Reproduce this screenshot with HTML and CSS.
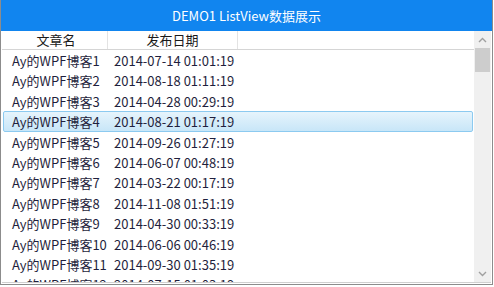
FILE: index.html
```html
<!DOCTYPE html>
<html lang="zh-CN">
<head>
    <meta charset="UTF-8">
    <title>DEMO1 ListView数据展示</title>
    <link rel="stylesheet" href="styles.css">
</head>
<body>
    <div class="window">
        <div class="title">DEMO1 ListView数据展示</div>
        <div class="listview">
            <div class="list">
                <div class="header">
                    <div class="col name">文章名</div>
                    <div class="col date">发布日期</div>
                    <div class="col rest"></div>
                </div>
                <div class="rows">
                    <div class="row"><span class="name">Ay的WPF博客1</span><span class="date">2014-07-14 01:01:19</span></div>
                    <div class="row"><span class="name">Ay的WPF博客2</span><span class="date">2014-08-18 01:11:19</span></div>
                    <div class="row"><span class="name">Ay的WPF博客3</span><span class="date">2014-04-28 00:29:19</span></div>
                    <div class="row selected"><span class="name">Ay的WPF博客4</span><span class="date">2014-08-21 01:17:19</span></div>
                    <div class="row"><span class="name">Ay的WPF博客5</span><span class="date">2014-09-26 01:27:19</span></div>
                    <div class="row"><span class="name">Ay的WPF博客6</span><span class="date">2014-06-07 00:48:19</span></div>
                    <div class="row"><span class="name">Ay的WPF博客7</span><span class="date">2014-03-22 00:17:19</span></div>
                    <div class="row"><span class="name">Ay的WPF博客8</span><span class="date">2014-11-08 01:51:19</span></div>
                    <div class="row"><span class="name">Ay的WPF博客9</span><span class="date">2014-04-30 00:33:19</span></div>
                    <div class="row"><span class="name">Ay的WPF博客10</span><span class="date">2014-06-06 00:46:19</span></div>
                    <div class="row"><span class="name">Ay的WPF博客11</span><span class="date">2014-09-30 01:35:19</span></div>
                    <div class="row"><span class="name">Ay的WPF博客12</span><span class="date">2014-07-15 01:03:19</span></div>
                </div>
            </div>
            <div class="scrollbar">
                <div class="arrow up">
                    <svg width="9" height="6" viewBox="0 0 9 6"><path d="M1 5 L4.5 1.5 L8 5" fill="none" stroke="#a0a0a0" stroke-width="1.4"/></svg>
                </div>
                <div class="thumb"></div>
                <div class="track"></div>
                <div class="arrow down">
                    <svg width="9" height="6" viewBox="0 0 9 6"><path d="M1 1 L4.5 4.5 L8 1" fill="none" stroke="#a0a0a0" stroke-width="1.4"/></svg>
                </div>
            </div>
        </div>
    </div>
</body>
</html>
```

FILE: styles.css
```css
* {
    margin: 0;
    padding: 0;
    box-sizing: border-box;
}

body {
    background: #ffffff;
    font-family: "Noto Sans CJK SC", "Noto Sans", sans-serif;
    font-size: 13px;
    color: #1f1f3d;
}

.window {
    width: 493px;
    height: 285px;
    border: 1px solid #8c8c8c;
    border-top: none;
    display: flex;
    flex-direction: column;
    background: #ffffff;
}

.title {
    height: 31px;
    background: #1185ef;
    color: #ffffff;
    text-align: center;
    line-height: 31px;
    font-size: 13px;
}

.listview {
    flex: 1;
    margin: 0 1px 1px 1px;
    border-bottom: 1px solid #d0d0d0;
    display: flex;
    overflow: hidden;
}

.list {
    flex: 1;
    display: flex;
    flex-direction: column;
    overflow: hidden;
}

.header {
    display: flex;
    height: 19px;
    border-bottom: 1px solid #d5d5d5;
    flex-shrink: 0;
}

.header .col {
    text-align: center;
    line-height: 18px;
    color: #1a1a1a;
    border-right: 1px solid #e3e3e3;
}

.header .name {
    width: 103px;
    margin-left: 3px;
}

.header .date {
    width: 130px;
}

.header .rest {
    flex: 1;
    border-right: none;
}

.row {
    height: 20.4px;
    line-height: 19px;
    display: flex;
    margin: 0 1px;
    border: 1px solid transparent;
    border-radius: 2px;
    white-space: nowrap;
}

.row .name {
    width: 110px;
    padding-left: 8px;
}

.row.selected {
    background: linear-gradient(#e6f4fc, #c8e6f8);
    border-color: #8ccaf0;
}

.scrollbar {
    width: 17px;
    background: #f0f0f0;
    display: flex;
    flex-direction: column;
}

.arrow {
    height: 17px;
    display: flex;
    align-items: center;
    justify-content: center;
}

.thumb {
    height: 24px;
    margin: 0 1px;
    background: #cdcdcd;
}

.track {
    flex: 1;
}
```
